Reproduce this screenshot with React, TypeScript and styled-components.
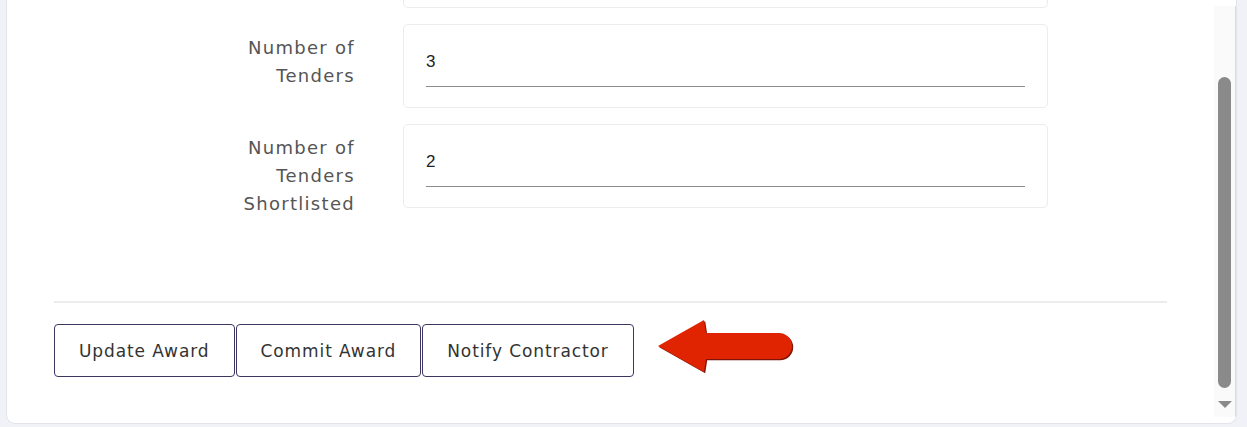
import React from "react";
import styled, { createGlobalStyle } from "styled-components";

const Global = createGlobalStyle`
  html, body { margin: 0; padding: 0; }
  body {
    background: #f1f1f8;
    font-family: "DejaVu Sans", "Open Sans", sans-serif;
    width: 1247px;
    height: 427px;
    overflow: hidden;
  }
`;

const Page = styled.div`
  display: flex;
  padding: 0 10px 0 6px;
  height: 427px;
  box-sizing: border-box;
`;

const Card = styled.div`
  flex: 1;
  display: flex;
  height: 424px;
  background: #ffffff;
  border: 1px solid #e3e3ea;
  border-top: none;
  border-radius: 0 0 9px 9px;
  box-sizing: border-box;
  overflow: hidden;
`;

const Main = styled.div`
  flex: 1;
  display: flex;
  flex-direction: column;
  padding: 0 47px 0 47px;
  min-width: 0;
`;

const Rows = styled.div`
  display: grid;
  grid-template-columns: 301px 645px;
  column-gap: 48px;
  row-gap: 16px;
  align-items: start;
`;

const Stub = styled.div`
  grid-column: 2;
  height: 7px;
  border: 1px solid #ececf0;
  border-top: none;
  border-radius: 0 0 5px 5px;
`;

const Label = styled.div`
  grid-column: 1;
  justify-self: end;
  max-width: 140px;
  text-align: right;
  padding-top: 10px;
  font-size: 18px;
  letter-spacing: 1.3px;
  line-height: 28px;
  color: #555555;
`;

const FieldBox = styled.div`
  grid-column: 2;
  height: 84px;
  box-sizing: border-box;
  border: 1px solid #ececf0;
  border-radius: 5px;
  padding: 22px 22px 0 22px;
`;

const Input = styled.input`
  display: block;
  width: 100%;
  height: 40px;
  box-sizing: border-box;
  border: none;
  border-bottom: 1px solid #8c8c8c;
  padding: 0 0 10px 0;
  outline: none;
  background: transparent;
  font-family: "Liberation Sans", Arial, sans-serif;
  font-size: 17px;
  color: #222;
`;

const Divider = styled.div`
  margin-top: 83px;
  height: 2px;
  background: #ececee;
`;

const Actions = styled.div`
  display: flex;
  align-items: center;
  gap: 1px;
  margin-top: 21px;
`;

const Button = styled.button`
  height: 53px;
  padding: 0 24px;
  background: #ffffff;
  border: 1px solid #3b3760;
  border-radius: 4px;
  font-family: "DejaVu Sans", "Open Sans", sans-serif;
  font-size: 17px;
  letter-spacing: 0.9px;
  color: #333;
  cursor: pointer;
`;

const Pointer = styled.svg`
  margin-left: 20px;
  margin-top: -10px;
  display: block;
`;

const Track = styled.div`
  width: 22px;
  margin-top: 6px;
  margin-bottom: 6px;
  background: #fafafa;
  display: flex;
  flex-direction: column;
  align-items: center;
  padding-top: 71px;
  box-sizing: border-box;
  border-right: 1px solid #dcdce2;
`;

const Thumb = styled.div`
  width: 13px;
  height: 311px;
  border-radius: 7px;
  background: #8a8a8a;
`;

const DownArrow = styled.div`
  margin-top: 13px;
  width: 0;
  height: 0;
  border-left: 7px solid transparent;
  border-right: 7px solid transparent;
  border-top: 7px solid #8a8a8a;
`;

const ARROW = "M3 29 L49 3 L51 16 L124 16 A13 13 0 0 1 124 42 L51 42 L49 55 Z";

export default function App() {
  return (
    <>
      <Global />
      <Page>
        <Card>
          <Main>
            <Rows>
              <Stub />
              <Label>Number of Tenders</Label>
              <FieldBox>
                <Input defaultValue="3" />
              </FieldBox>
              <Label>Number of Tenders Shortlisted</Label>
              <FieldBox>
                <Input defaultValue="2" />
              </FieldBox>
            </Rows>
            <Divider />
            <Actions>
              <Button>Update Award</Button>
              <Button>Commit Award</Button>
              <Button>Notify Contractor</Button>
              <Pointer width="140" height="58" viewBox="0 0 140 58">
                <path d={ARROW} fill="#7c1608" transform="translate(1.2 1.2)" />
                <path d={ARROW} fill="#e02300" />
              </Pointer>
            </Actions>
          </Main>
          <Track>
            <Thumb />
            <DownArrow />
          </Track>
        </Card>
      </Page>
    </>
  );
}
